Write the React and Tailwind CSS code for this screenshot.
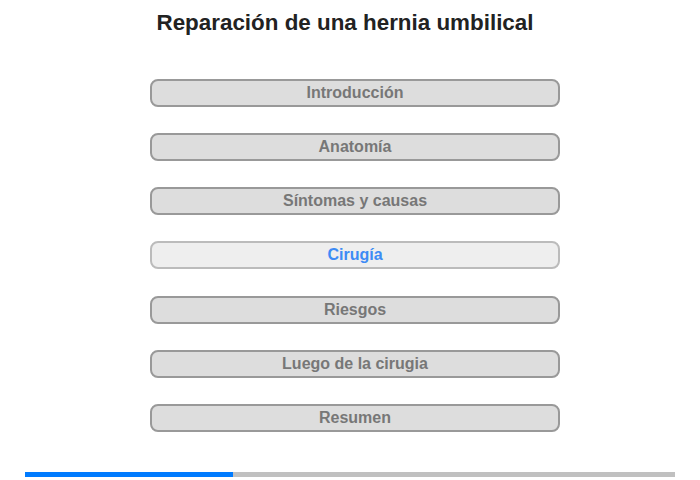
import React from "react";

const items = [
  "Introducción",
  "Anatomía",
  "Síntomas y causas",
  "Cirugía",
  "Riesgos",
  "Luego de la cirugia",
  "Resumen",
];

export default function App() {
  return (
    <div
      className="w-[700px] h-[480px] bg-white flex flex-col"
      style={{ fontFamily: '"Liberation Sans", Arial, sans-serif' }}
    >
      <h1 className="mt-[10px] ml-[-10px] text-center text-[22.4px] leading-[26px] font-bold text-[#222]">
        Reparación de una hernia umbilical
      </h1>
      <div className="mt-[43px] ml-[150px] w-[410px] flex flex-col">
        {items.map((t, i) => {
          const active = i === 3;
          const mt = i === 0 ? "" : i === 4 ? "mt-[27px]" : "mt-[26px]";
          return (
            <div
              key={t}
              className={
                active
                  ? `${mt} h-[28px] rounded-[8px] border-2 border-[#bbbbbb] bg-[#eeeeee] flex items-center justify-center text-[16px] font-bold text-[#3d8bf5]`
                  : `${mt} h-[28px] rounded-[8px] border-2 border-[#999999] bg-[#dddddd] flex items-center justify-center text-[16px] font-bold text-[#777777]`
              }
            >
              {t}
            </div>
          );
        })}
      </div>
      <div className="mt-[40px] ml-[25px] w-[650px] h-[5px] bg-[#c0c0c0] flex">
        <div className="w-[208px] h-full bg-[#007bff]" />
      </div>
    </div>
  );
}
